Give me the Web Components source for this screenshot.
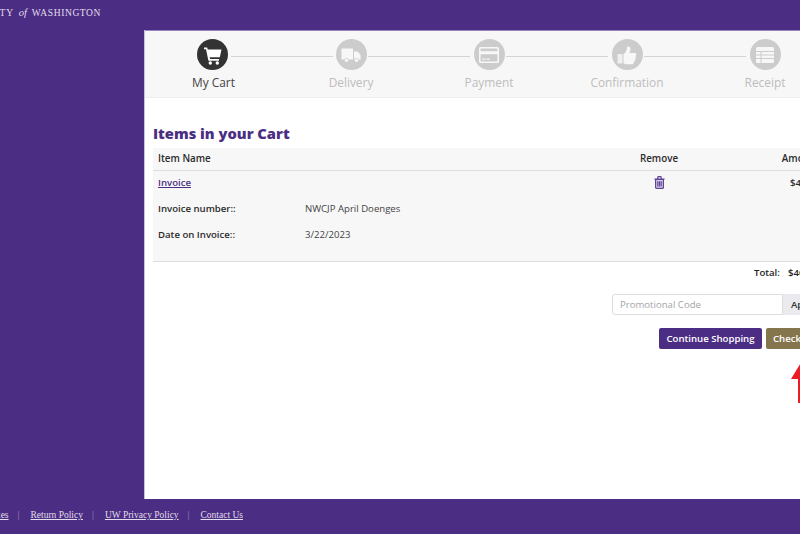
<!DOCTYPE html>
<html>
<head>
<meta charset="utf-8">
<style>
html, body { margin: 0; padding: 0; height: 100%; overflow: hidden; background: #4b2e83; }
body { display: flex; flex-direction: column; width: 800px; height: 534px; font-family: "Open Sans", sans-serif; }
</style>
</head>
<body>
<uw-header></uw-header>
<cart-panel>
  <check-steps>
    <check-step label="My Cart" icon="cart" active></check-step>
    <check-step label="Delivery" icon="truck"></check-step>
    <check-step label="Payment" icon="card"></check-step>
    <check-step label="Confirmation" icon="thumb"></check-step>
    <check-step label="Receipt" icon="list" last></check-step>
  </check-steps>
  <cart-table></cart-table>
  <cart-actions></cart-actions>
  <red-arrow></red-arrow>
</cart-panel>
<uw-footer></uw-footer>

<script>
class UwHeader extends HTMLElement {
    connectedCallback() {
        this.attachShadow({ mode: 'open' });
        this.shadowRoot.innerHTML = `
            <style>
                :host { display: flex; justify-content: flex-end; flex: none; width: 101px; height: 30px; overflow: hidden; }
                .word { flex: none; white-space: nowrap; color: #e4dfee;
                        font: 9.5px/26px "Liberation Serif", serif; letter-spacing: .6px; }
                b { font-weight: 400; letter-spacing: .8px; }
                i { font-size: 10.5px; margin: 0 2px; letter-spacing: 0; }
            </style>
            <div class="word"><b>UNIVERSITY</b> <i>of</i> WASHINGTON</div>
        `;
    }
}

class CartPanel extends HTMLElement {
    connectedCallback() {
        this.attachShadow({ mode: 'open' });
        this.shadowRoot.innerHTML = `
            <style>
                :host { display: block; position: relative; flex: none; box-sizing: border-box; width: 691px; height: 469px;
                        margin-left: 144px; background: #fff; border-left: 1px solid #c9bfde; }
            </style>
            <slot></slot>
        `;
    }
}

class CheckSteps extends HTMLElement {
    connectedCallback() {
        this.attachShadow({ mode: 'open' });
        this.shadowRoot.innerHTML = `
            <style>
                :host { display: grid; grid-template-columns: 137px repeat(4, 138px); box-sizing: border-box; height: 68px;
                        background: #f7f7f7; border-bottom: 1px solid #eee; border-top: 1px solid #9a86bf; }
            </style>
            <slot></slot>
        `;
    }
}

const STEP_ICONS = {
    cart: '<path d="M3 4.500h3.200l.5 2H20.500l-1.700 7.800H8.700l.4 1.700H18v1.700H7.400L5 6.200H3z"/><circle cx="9.300" cy="20" r="1.700"/><circle cx="16.300" cy="20" r="1.700"/>',
    truck: '<path d="M2.500 5.500h11.500v11H9.700a2.400 2.400 0 0 0-4.400 0H2.500z"/><path d="M15 8.500h3.600l3 3.800v4.200h-1.800a2.400 2.400 0 0 0-4.400 0H15z"/><circle cx="7.500" cy="17.300" r="1.700"/><circle cx="17.600" cy="17.300" r="1.700"/>',
    card: '<path fill-rule="evenodd" d="M3.500 4h17A1.500 1.500 0 0 1 22 5.500v13a1.500 1.500 0 0 1-1.500 1.500h-17A1.500 1.500 0 0 1 2 18.500v-13A1.500 1.500 0 0 1 3.500 4zM3.600 5.600v2.600h16.800V5.600zM3.600 11.200v7.200h16.800v-7.200zM5.200 15.400h3.200v1.400H5.200zM9.600 15.400h3.200v1.400H9.600z"/>',
    thumb: '<path d="M2.500 11H7.500v9.500H2.500z" opacity=".8"/><path d="M8.500 11.200c2.200-1.500 3.300-3.700 3.500-7 .1-1.100 3-1 3.400 1.100.2 1.700-.3 3.300-1.100 4.700h5.300c2.200 0 2.200 2.800.7 3.300 1 1 .7 2.700-.4 3.100.4 1.100-.1 2.400-1.200 2.800.2 1.100-.6 2.100-1.800 2.100H11.800c-1.300 0-2.200-.6-3.300-1z"/>',
    list: '<path d="M3 5.500A1.500 1.500 0 0 1 4.500 4h15A1.500 1.500 0 0 1 21 5.500V8H3zM3 9h4.500v2.500H3zM8.500 9H21v2.500H8.500zM3 12.500h4.500V15H3zM8.500 12.500H21V15H8.500zM3 16h4.500v4h-3A1.500 1.500 0 0 1 3 18.500zM8.500 16H21v2.500A1.500 1.500 0 0 1 19.500 20H8.500z"/>'
};

class CheckStep extends HTMLElement {
    connectedCallback() {
        const active = this.hasAttribute('active');
        const last = this.hasAttribute('last');
        this.attachShadow({ mode: 'open' });
        this.shadowRoot.innerHTML = `
            <style>
                :host { display: flex; flex-direction: column; align-items: center; position: relative; padding-top: 8px; }
                .dot { width: 31px; height: 31px; border-radius: 50%; background: ${active ? '#333' : '#ccc'};
                       margin-right: ${active ? '2px' : '0'};
                       display: flex; align-items: center; justify-content: center; }
                svg { width: 24px; height: 24px; fill: ${active ? '#fff' : '#f7f7f7'}; }
                .lbl { margin-top: 4px; font-size: 11.9px; line-height: 17px; color: ${active ? '#444' : '#bdbdbd'}; }
                .line { position: absolute; top: 25px; left: calc(50% + 17px); width: 102px; height: 1px; background: #d4d4d4;
                        display: ${last ? 'none' : 'block'}; }
            </style>
            <div class="dot"><svg viewBox="0 0 24 24">${STEP_ICONS[this.getAttribute('icon')]}</svg></div>
            <div class="lbl">${this.getAttribute('label')}</div>
            <div class="line"></div>
        `;
    }
}

class CartTable extends HTMLElement {
    connectedCallback() {
        this.attachShadow({ mode: 'open' });
        this.shadowRoot.innerHTML = `
            <style>
                :host { display: block; padding: 24px 9px 0 8px; font-size: 9.6px; color: #2b2b2b; }
                h2 { margin: 0 0 4px; font: 800 14.7px/22px "Open Sans", sans-serif; color: #4b2e83; }
                .row { display: grid; grid-template-columns: 1fr 70px 132px; background: #f7f7f7; align-items: center; }
                .head { height: 20px; padding-bottom: 2px; border-bottom: 1px solid #ddd; font-weight: 600; font-size: 9.8px; }
                .head > div:first-child, .body .name { padding-left: 5px; }
                .remove { text-align: center; }
                .amount { text-align: right; font-weight: 600; padding-right: 6px; }
                .body { background: #f7f7f7; height: 91px; border-bottom: 1px solid #ddd; box-sizing: border-box; }
                .top { height: 23px; }
                a { color: #4b2e83; font-weight: 600; }
                .trash { display: block; margin: 0 auto; width: 11px; height: 13px; fill: #d8d0e6; stroke: #5f429a; stroke-width: 1.200; }
                dl { margin: 0; padding: 1px 0 0 5px; display: grid; grid-template-columns: 147px 1fr; grid-auto-rows: 26px; align-items: center; }
                dt { font-weight: 600; }
                dd { margin: 0; color: #444; }
            </style>
            <h2>Items in your Cart</h2>
            <div class="row head">
                <div>Item Name</div><div class="remove">Remove</div><div class="amount">Amount</div>
            </div>
            <div class="body">
                <div class="row top">
                    <div class="name"><a href="#">Invoice</a></div>
                    <div class="remove"><svg class="trash" viewBox="0 0 11 13"><path d="M1.600 3.500h7.800V11.400a1 1 0 0 1-1 1H2.600a1 1 0 0 1-1-1z"/><path d="M.3 3h10.400M3.600 3l.5-2.300h2.800L7.400 3M3.800 5.200v5.400M5.500 5.200v5.400M7.200 5.200v5.400" fill="none"/></svg></div>
                    <div class="amount">$40.00</div>
                </div>
                <dl>
                    <dt>Invoice number::</dt><dd>NWCJP April Doenges</dd>
                    <dt>Date on Invoice::</dt><dd>3/22/2023</dd>
                </dl>
            </div>
        `;
    }
}

class CartActions extends HTMLElement {
    connectedCallback() {
        this.attachShadow({ mode: 'open' });
        this.shadowRoot.innerHTML = `
            <style>
                :host { display: flex; flex-direction: column; align-items: flex-end; padding: 0 11px 0 0; font-size: 9.6px; color: #333; }
                .total { height: 22px; line-height: 22px; font-weight: 600; display: flex; gap: 8px; color: #222; margin-right: 6px; }
                .promo { display: flex; margin-top: 10px; height: 21px; }
                .input { box-sizing: border-box; width: 171px; height: 21px; border: 1px solid #ddd; border-radius: 3px 0 0 3px;
                         padding-left: 7px; line-height: 19px; color: #a4a4a4; }
                .apply { box-sizing: border-box; width: 41px; line-height: 21px; background: #ebebef; font-weight: 600; padding-left: 8px; }
                .btns { display: flex; gap: 4px; margin-top: 13px; margin-right: 2px; }
                .btn { height: 21px; line-height: 21px; border-radius: 2px; color: #fff; font-weight: 600; white-space: nowrap; box-sizing: border-box; }
                .go { background: #4b2e83; width: 103px; text-align: center; }
                .out { background: #85754d; width: 56px; padding-left: 7px; }
            </style>
            <div class="total"><span>Total:</span><span>$40.00</span></div>
            <div class="promo"><div class="input">Promotional Code</div><div class="apply">Apply</div></div>
            <div class="btns"><div class="btn go">Continue Shopping</div><div class="btn out">Checkout</div></div>
        `;
    }
}

class RedArrow extends HTMLElement {
    connectedCallback() {
        this.attachShadow({ mode: 'open' });
        this.shadowRoot.innerHTML = `
            <style>
                :host { display: block; position: absolute; left: 645px; top: 330px; width: 30px; height: 43px; }
                svg { display: block; width: 30px; height: 43px; fill: #ed1c24; }
            </style>
            <svg viewBox="0 0 30 43"><path d="M12 1L1 19H8V43H16V19H23z"/></svg>
        `;
    }
}

class UwFooter extends HTMLElement {
    connectedCallback() {
        this.attachShadow({ mode: 'open' });
        this.shadowRoot.innerHTML = `
            <style>
                :host { display: flex; justify-content: flex-end; flex: none; width: 243px; height: 35px; overflow: hidden; }
                div { flex: none; display: flex; align-items: center; gap: 9px; white-space: nowrap;
                      font: 9.5px "Liberation Serif", serif; color: #e2ddea; height: 32px; }
                a { color: inherit; }
                span { color: #9c90bd; margin-right: 2px; }
            </style>
            <div>
                <a href="#">Policies</a><span>|</span><a href="#">Return Policy</a><span>|</span>
                <a href="#">UW Privacy Policy</a><span>|</span><a href="#">Contact Us</a>
            </div>
        `;
    }
}

customElements.define('uw-header', UwHeader);
customElements.define('cart-panel', CartPanel);
customElements.define('check-steps', CheckSteps);
customElements.define('check-step', CheckStep);
customElements.define('cart-table', CartTable);
customElements.define('cart-actions', CartActions);
customElements.define('red-arrow', RedArrow);
customElements.define('uw-footer', UwFooter);
</script>
</body>
</html>
